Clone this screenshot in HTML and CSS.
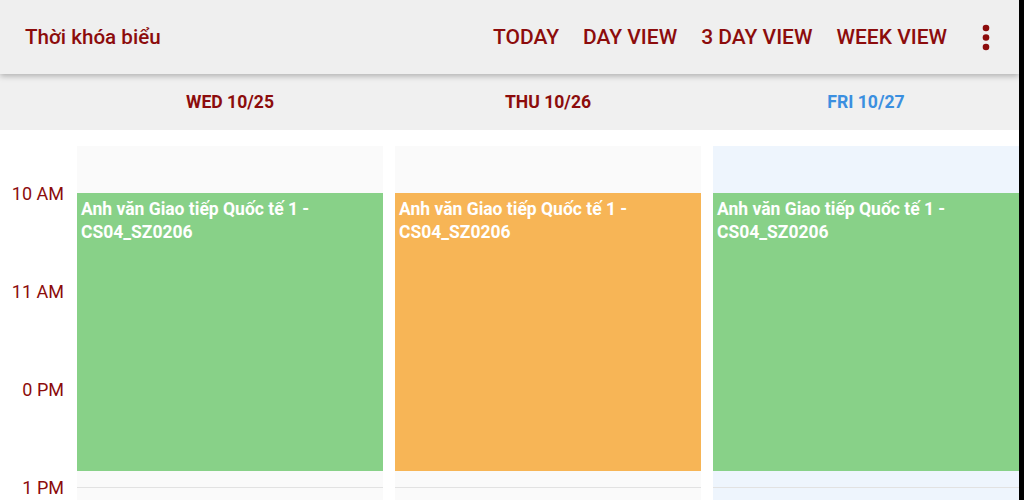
FILE: index.html
```html
<!DOCTYPE html>
<html lang="vi">
<head>
    <meta charset="UTF-8">
    <meta name="viewport" content="width=device-width, initial-scale=1.0">
    <title>Thời khóa biểu</title>
    <link rel="stylesheet" href="styles.css">
</head>
<body>

<div class="app">
    <div class="topbar">
        <div class="title">Thời khóa biểu</div>
        <div class="nav">
            <span class="nav-item">TODAY</span>
            <span class="nav-item">DAY VIEW</span>
            <span class="nav-item">3 DAY VIEW</span>
            <span class="nav-item">WEEK VIEW</span>
            <span class="menu">
                <svg width="8" height="28" viewBox="0 0 8 28">
                    <circle cx="4" cy="4" r="3.3" fill="#8c0c0c"/>
                    <circle cx="4" cy="13.5" r="3.3" fill="#8c0c0c"/>
                    <circle cx="4" cy="23" r="3.3" fill="#8c0c0c"/>
                </svg>
            </span>
        </div>
    </div>

    <div class="days">
        <div></div>
        <div class="day">WED 10/25</div>
        <div class="day">THU 10/26</div>
        <div class="day today">FRI 10/27</div>
    </div>

    <div class="timeline">
        <div class="hours">
            <div class="hour">10 AM</div>
            <div class="hour">11 AM</div>
            <div class="hour">0 PM</div>
            <div class="hour">1 PM</div>
        </div>

        <div class="column">
            <div class="lead"></div>
            <div class="slot"></div>
            <div class="slot"></div>
            <div class="slot"></div>
            <div class="slot"></div>
            <div class="event green">Anh văn Giao tiếp Quốc tế 1 - CS04_SZ0206</div>
        </div>

        <div class="column">
            <div class="lead"></div>
            <div class="slot"></div>
            <div class="slot"></div>
            <div class="slot"></div>
            <div class="slot"></div>
            <div class="event orange">Anh văn Giao tiếp Quốc tế 1 - CS04_SZ0206</div>
        </div>

        <div class="column today-col">
            <div class="lead"></div>
            <div class="slot"></div>
            <div class="slot"></div>
            <div class="slot"></div>
            <div class="slot"></div>
            <div class="event green">Anh văn Giao tiếp Quốc tế 1 - CS04_SZ0206</div>
        </div>
    </div>
</div>

</body>
</html>
```

FILE: styles.css
```css
* {
  box-sizing: border-box;
}
html, body {
  margin: 0;
  height: 500px;
  overflow: hidden;
  background-color: #000;
}
body {
  font-family: Roboto, "Noto Sans", sans-serif;
}
.app {
  width: 1019px;
  height: 500px;
  background-color: #fff;
  overflow: hidden;
}
.topbar {
  position: relative;
  z-index: 2;
  height: 74px;
  background-color: #efefef;
  box-shadow: 0 2px 6px rgba(0, 0, 0, 0.28);
  display: flex;
  align-items: center;
  justify-content: space-between;
  padding: 0 29px 0 25px;
  color: #8c0c0c;
}
.title {
  font-size: 20.6px;
  font-weight: 500;
}
.nav {
  display: flex;
  align-items: center;
  gap: 24px;
  font-size: 21px;
  font-weight: 500;
}
.menu {
  display: flex;
  margin-left: 11px;
  padding-top: 2px;
}
.days {
  display: grid;
  grid-template-columns: 65px repeat(3, 1fr);
  column-gap: 12px;
  height: 56px;
  align-items: center;
  background-color: #f0f0f0;
}
.day {
  text-align: center;
  font-size: 17.6px;
  font-weight: 700;
  color: #8c0c0c;
  padding-bottom: 1px;
}
.day.today {
  color: #3b8fe0;
}
.timeline {
  display: grid;
  grid-template-columns: 65px repeat(3, 1fr);
  column-gap: 12px;
  padding-top: 16px;
}
.hours {
  margin-top: -1px;
}
.hour {
  height: 98px;
  line-height: 98px;
  text-align: right;
  padding-right: 1px;
  font-size: 18px;
  color: #8c0c0c;
}
.column {
  position: relative;
  background-color: #fafafa;
  height: 400px;
}
.today-col {
  background-color: #eef5fd;
}
.lead {
  height: 47px;
}
.slot {
  height: 98px;
  border-top: 1px solid #e2e2e2;
}
.event {
  position: absolute;
  top: 47px;
  left: 0;
  right: 0;
  height: 278px;
  padding: 5px 4px;
  color: #fff;
  font-size: 17.5px;
  font-weight: 700;
  line-height: 22.5px;
}
.green {
  background-color: #88d188;
}
.orange {
  background-color: #f7b556;
}
```
